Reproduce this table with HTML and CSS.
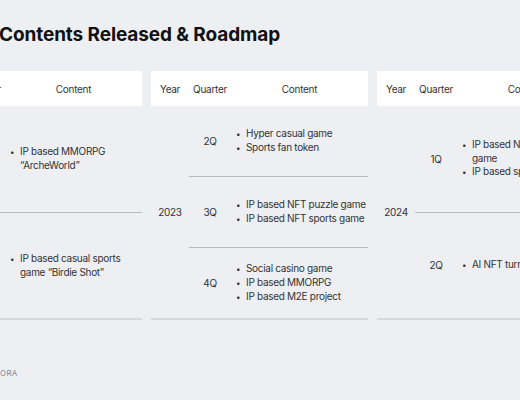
FILE: index.html
```html
<!DOCTYPE html>
<html lang="en">
<head>
<meta charset="utf-8">
<title>Contents Released &amp; Roadmap</title>
<link rel="stylesheet" href="styles.css">
</head>
<body>
<div class="slide">
  <h1 class="title">Contents Released &amp; Roadmap</h1>
  <div class="panels">
    <section class="panel">
      <div class="head">
        <div class="c-year">Year</div>
        <div class="c-q">Quarter</div>
        <div class="c-content">Content</div>
      </div>
      <div class="body">
        <div class="c-year year">2022</div>
        <div class="rows">
          <div class="row">
            <div class="c-q">3Q</div>
            <ul class="c-content list"><li>IP based MMORPG “ArcheWorld”</li></ul>
          </div>
          <div class="row">
            <div class="c-q">4Q</div>
            <ul class="c-content list"><li>IP based casual sports game “Birdie Shot”</li></ul>
          </div>
        </div>
      </div>
    </section>
    <section class="panel">
      <div class="head">
        <div class="c-year">Year</div>
        <div class="c-q">Quarter</div>
        <div class="c-content">Content</div>
      </div>
      <div class="body">
        <div class="c-year year">2023</div>
        <div class="rows">
          <div class="row">
            <div class="c-q">2Q</div>
            <ul class="c-content list"><li>Hyper casual game</li><li>Sports fan token</li></ul>
          </div>
          <div class="row">
            <div class="c-q">3Q</div>
            <ul class="c-content list"><li>IP based NFT puzzle game</li><li>IP based NFT sports game</li></ul>
          </div>
          <div class="row">
            <div class="c-q">4Q</div>
            <ul class="c-content list"><li>Social casino game</li><li>IP based MMORPG</li><li>IP based M2E project</li></ul>
          </div>
        </div>
      </div>
    </section>
    <section class="panel">
      <div class="head">
        <div class="c-year">Year</div>
        <div class="c-q">Quarter</div>
        <div class="c-content">Content</div>
      </div>
      <div class="body">
        <div class="c-year year">2024</div>
        <div class="rows">
          <div class="row">
            <div class="c-q">1Q</div>
            <ul class="c-content list"><li>IP based NFT shooter game</li><li>IP based sports game</li></ul>
          </div>
          <div class="row">
            <div class="c-q">2Q</div>
            <ul class="c-content list"><li>AI NFT turn-based game</li></ul>
          </div>
        </div>
      </div>
    </section>
  </div>
  <footer class="foot">
    <span class="brand">ORA</span>
  </footer>
</div>
</body>
</html>
```
FILE: styles.css
```css
* { box-sizing: border-box; }
html, body { margin: 0; padding: 0; }
body {
  width: 520px;
  height: 400px;
  overflow: hidden;
  background: #eeeff3;
  font-family: Inter, "Noto Sans", sans-serif;
  color: #333;
}
.slide {
  padding-top: 23px;
}
.title {
  margin: 0 0 24px -1px;
  font-size: 19px;
  line-height: 24px;
  font-weight: 700;
  letter-spacing: -0.1px;
  color: #111;
  white-space: nowrap;
}
.panels {
  display: flex;
  gap: 9px;
  margin-left: -75px;
}
.panel {
  flex: 0 0 217px;
  width: 217px;
  font-size: 10px;
  letter-spacing: -0.3px;
}
.head {
  display: flex;
  align-items: center;
  height: 35px;
  background: #fff;
  line-height: 12px;
}
.c-year {
  flex: 0 0 38px;
  text-align: center;
}
.c-q {
  flex: 0 0 42px;
  text-align: center;
}
.c-content {
  flex: 1;
  text-align: center;
}
.body {
  display: flex;
  height: 214px;
  border-bottom: 2px solid #d7d8dc;
}
.year {
  display: flex;
  align-items: center;
  justify-content: center;
}
.rows {
  flex: 1;
  display: flex;
  flex-direction: column;
}
.row {
  flex: 1;
  display: flex;
  align-items: center;
  border-bottom: 1px solid #b9babe;
}
.row:last-child { border-bottom: 0; }
.list {
  margin: 0;
  padding: 0 2px 0 5px;
  list-style: none;
  text-align: left;
  line-height: 13px;
}
.list li {
  padding-left: 10px;
  text-indent: -10px;
}
.list li::before {
  content: "•";
  display: inline-block;
  width: 10px;
  text-indent: 0;
  font-size: 8px;
}
.foot {
  margin-top: 48px;
  font-size: 8px;
  line-height: 10px;
  color: #8a8b8f;
  letter-spacing: 0.3px;
}
```
